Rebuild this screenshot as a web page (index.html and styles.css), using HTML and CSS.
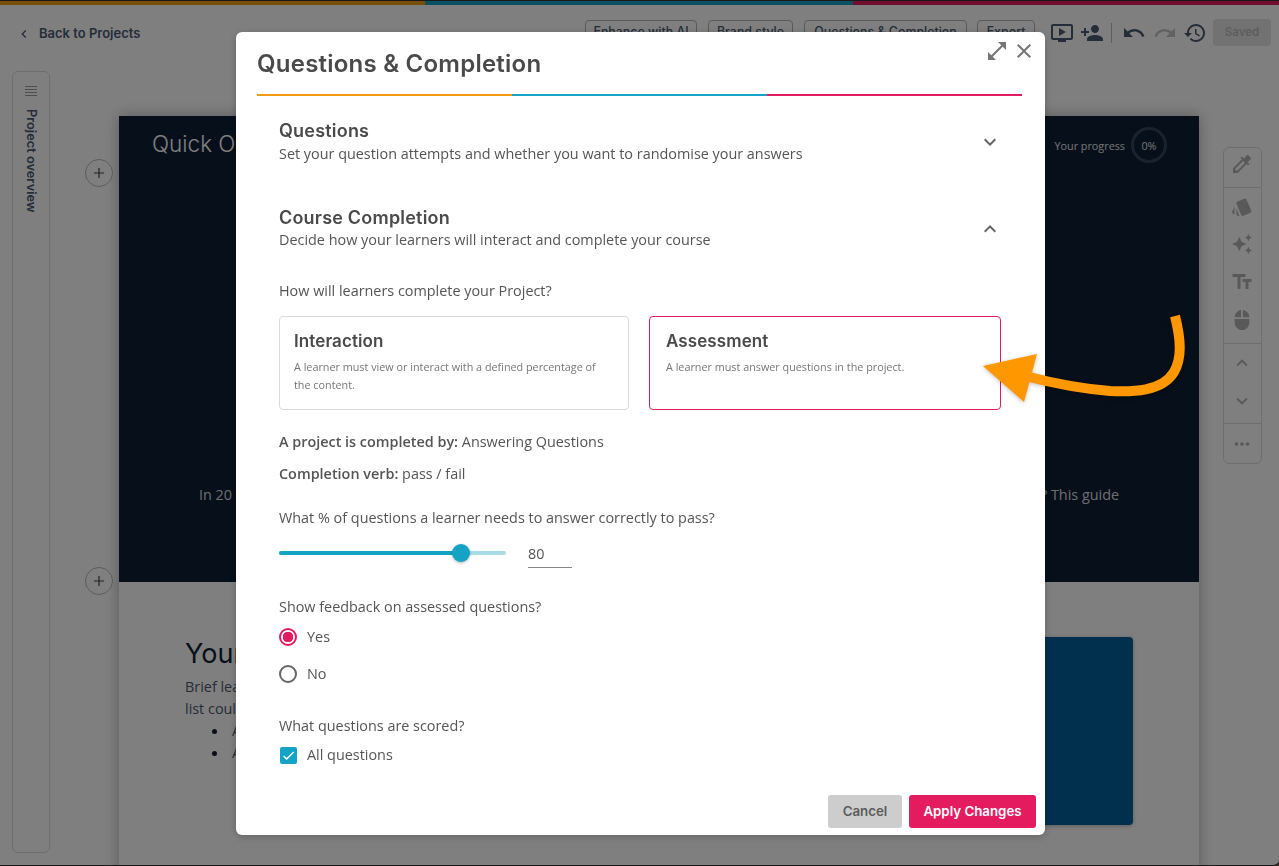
FILE: index.html
```html
<!DOCTYPE html>
<html lang="en">
<head>
<meta charset="utf-8">
<title>Questions &amp; Completion</title>
<link rel="stylesheet" href="styles.css">
</head>
<body>
<div class="page">
  <div class="stripe"><span class="c-orange"></span><span class="c-teal"></span><span class="c-pink"></span></div>
  <header class="topbar">
    <a class="back"><svg class="i14" viewBox="0 0 24 24"><path d="M15.41 7.41L14 6l-6 6 6 6 1.41-1.41L10.83 12z"/></svg>Back to Projects</a>
    <div class="actions">
      <div class="tbtns">
        <button class="tbtn b1">Enhance with AI</button>
        <button class="tbtn b2">Brand style</button>
        <button class="tbtn b3">Questions &amp; Completion</button>
        <button class="tbtn b4">Export</button>
      </div>
      <div class="ticons">
        <svg class="i24" viewBox="0 0 24 24"><path d="M21 3H3c-1.1 0-2 .9-2 2v12c0 1.1.9 2 2 2h5v2h8v-2h5c1.1 0 1.99-.9 1.99-2L23 5c0-1.1-.9-2-2-2zm0 14H3V5h18v12zm-5-6l-7 4V7z"/></svg>
        <svg class="i24" viewBox="0 0 24 24"><path d="M15 12c2.21 0 4-1.79 4-4s-1.79-4-4-4-4 1.79-4 4 1.79 4 4 4zm-9-2V7H4v3H1v2h3v3h2v-3h3v-2H6zm9 4c-2.67 0-8 1.34-8 4v2h16v-2c0-2.66-5.33-4-8-4z"/></svg>
        <span class="vsep"></span>
        <svg class="i24 undo" viewBox="0 0 24 24"><path d="M12.5 8c-2.65 0-5.05.99-6.9 2.6L2 7v9h9l-3.62-3.62c1.39-1.16 3.16-1.88 5.12-1.88 3.54 0 6.55 2.31 7.6 5.5l2.37-.78C21.08 11.03 17.15 8 12.5 8z"/></svg>
        <svg class="i24 off" viewBox="0 0 24 24"><path d="M18.4 10.6C16.55 8.99 14.15 8 11.5 8c-4.65 0-8.58 3.03-9.96 7.22L3.9 16c1.05-3.19 4.05-5.5 7.6-5.5 1.95 0 3.73.72 5.12 1.88L13 16h9V7l-3.6 3.6z"/></svg>
        <svg class="i24" viewBox="0 0 24 24"><path d="M13 3c-4.97 0-9 4.03-9 9H1l3.89 3.89.07.14L9 12H6c0-3.87 3.13-7 7-7s7 3.13 7 7-3.13 7-7 7c-1.93 0-3.68-.79-4.94-2.06l-1.42 1.42C8.27 19.99 10.51 21 13 21c4.97 0 9-4.03 9-9s-4.03-9-9-9zm-1 5v5l4.28 2.54.72-1.21-3.5-2.08V8H12z"/></svg>
        <button class="saved">Saved</button>
      </div>
    </div>
  </header>
  <main class="workspace">
    <aside class="overview">
      <svg class="menu" viewBox="0 0 14 12"><path d="M1 1.5h12M1 4.5h12M1 7.5h12M1 10.5h12" /></svg>
      <span class="overview-label">Project overview</span>
    </aside>
    <div class="canvas">
      <section class="hero">
        <span class="add add-a"><svg viewBox="0 0 12 12"><path d="M6 1v10M1 6h10"/></svg></span>
        <div class="hero-head">
          <span class="hero-title">Quick Overview</span>
          <div class="progress"><span>Your progress</span><span class="ring">0%</span></div>
        </div>
        <p class="hero-text">In 20 minutes, you will learn how to build a course that really engages your learners from the first screen. Ready to get started? This guide</p>
      </section>
      <section class="content">
        <span class="add add-b"><svg viewBox="0 0 12 12"><path d="M6 1v10M1 6h10"/></svg></span>
        <div class="copy">
          <h2>Your learning goals</h2>
          <p>Brief learning objectives could go here.<br>list could be used to present them.</p>
          <ul><li>A first objective</li><li>A second objective</li></ul>
        </div>
        <div class="bluebox"></div>
      </section>
    </div>
    <aside class="tools">
      <div class="tgroup g1">
        <svg class="i24t" viewBox="0 0 24 24"><path d="M20.71 5.63l-2.34-2.34c-.39-.39-1.02-.39-1.41 0l-3.12 3.12-1.93-1.91-1.41 1.41 1.42 1.42L3 16.25V21h4.75l8.92-8.92 1.42 1.42 1.41-1.41-1.92-1.92 3.12-3.12c.4-.4.4-1.03.01-1.42zM6.92 19L5 17.08l8.06-8.06 1.92 1.92L6.92 19z"/></svg>
      </div>
      <div class="tgroup g2">
        <svg class="i22" viewBox="0 0 24 24"><path d="M2.53 19.65l1.34.56v-9.03l-2.43 5.86c-.41 1.02.08 2.19 1.09 2.61zm19.5-3.7L17.07 3.98c-.31-.75-1.04-1.21-1.81-1.23-.26 0-.53.04-.79.15L7.1 5.95c-.75.31-1.21 1.03-1.23 1.8-.01.27.04.54.15.8l4.96 11.97c.31.76 1.05 1.22 1.83 1.23.26 0 .52-.05.77-.15l7.36-3.05c1.02-.42 1.51-1.59 1.09-2.6zM5.88 19.75c0 1.1.9 2 2 2h1.45l-3.45-8.34v6.34z"/></svg>
        <svg class="i22" viewBox="0 0 24 24"><path d="M19 9l1.25-2.75L23 5l-2.75-1.25L19 1l-1.25 2.75L15 5l2.75 1.25L19 9zm-7.5.5L9 4 6.5 9.5 1 12l5.5 2.5L9 20l2.5-5.5L17 12l-5.5-2.5zM19 15l-1.25 2.75L15 19l2.75 1.25L19 23l1.25-2.75L23 19l-2.75-1.25L19 15z"/></svg>
        <svg class="i24t" viewBox="0 0 24 24"><path d="M2.5 4v3h5v12h3V7h5V4h-13zm19 5h-9v3h3v7h3v-7h3V9z"/></svg>
        <svg class="i22" viewBox="0 0 24 24"><path d="M13 1.07V9h7c0-4.08-3.05-7.44-7-7.93zM4 15c0 4.42 3.58 8 8 8s8-3.58 8-8v-4H4v4zm7-13.93C7.05 1.56 4 4.92 4 9h7V1.07z"/></svg>
      </div>
      <div class="tgroup g3">
        <svg class="i22" viewBox="0 0 24 24"><path d="M7.41 15.41L12 10.83l4.59 4.58L18 14l-6-6-6 6z"/></svg>
        <svg class="i22" viewBox="0 0 24 24"><path d="M16.59 8.59L12 13.17 7.41 8.59 6 10l6 6 6-6z"/></svg>
      </div>
      <div class="tgroup g4">
        <svg class="i22" viewBox="0 0 24 24"><path d="M6 10c-1.1 0-2 .9-2 2s.9 2 2 2 2-.9 2-2-.9-2-2-2zm12 0c-1.1 0-2 .9-2 2s.9 2 2 2 2-.9 2-2-.9-2-2-2zm-6 0c-1.1 0-2 .9-2 2s.9 2 2 2 2-.9 2-2-.9-2-2-2z"/></svg>
      </div>
    </aside>
  </main>
</div>

<div class="overlay">
  <div class="modal">
    <div class="modal-head">
      <h1>Questions &amp; Completion</h1>
      <div class="modal-icons">
        <svg class="expand" viewBox="0 0 24 24"><path d="M21 11V3h-8l3.29 3.29-10 10L3 13v8h8l-3.29-3.29 10-10z"/></svg>
        <svg class="close" viewBox="0 0 24 24"><path d="M19 6.41L17.59 5 12 10.59 6.41 5 5 6.41 10.59 12 5 17.59 6.41 19 12 13.41 17.59 19 19 17.59 13.41 12z"/></svg>
      </div>
      <div class="rule"><span class="c-orange"></span><span class="c-teal"></span><span class="c-pink"></span></div>
    </div>
    <div class="modal-body">
      <div class="acc acc-first">
        <div><h3>Questions</h3><p>Set your question attempts and whether you want to randomise your answers</p></div>
        <svg class="chev" viewBox="0 0 24 24"><path d="M16.59 8.59L12 13.17 7.41 8.59 6 10l6 6 6-6z"/></svg>
      </div>
      <div class="acc acc-second">
        <div><h3>Course Completion</h3><p>Decide how your learners will interact and complete your course</p></div>
        <svg class="chev" viewBox="0 0 24 24"><path d="M7.41 15.41L12 10.83l4.59 4.58L18 14l-6-6-6 6z"/></svg>
      </div>
      <p class="line q1">How will learners complete your Project?</p>
      <div class="cards">
        <div class="card"><h4>Interaction</h4><p>A learner must view or interact with a defined percentage of the content.</p></div>
        <div class="card active"><h4>Assessment</h4><p>A learner must answer questions in the project.</p></div>
      </div>
      <p class="line l1"><b>A project is completed by:</b> Answering Questions</p>
      <p class="line l2"><b>Completion verb:</b> pass / fail</p>
      <p class="line l3">What % of questions a learner needs to answer correctly to pass?</p>
      <div class="slider-row">
        <div class="slider"><div class="fill" style="width:80%"><span class="thumb"></span></div></div>
        <span class="value">80</span>
      </div>
      <p class="line l4">Show feedback on assessed questions?</p>
      <div class="opt o1"><span class="radio on"></span>Yes</div>
      <div class="opt o2"><span class="radio"></span>No</div>
      <p class="line l5">What questions are scored?</p>
      <div class="opt o3"><span class="check"><svg viewBox="0 0 24 24"><path d="M9 16.17L4.83 12l-1.42 1.41L9 19 21 7l-1.41-1.41z"/></svg></span>All questions</div>
    </div>
    <div class="modal-foot">
      <button class="btn cancel">Cancel</button>
      <button class="btn apply">Apply Changes</button>
    </div>
  </div>
</div>

<svg class="callout" viewBox="0 0 1279 866">
  <path class="shaft" d="M1175 316C1181 340 1182 358 1174 372C1162 392 1132 392 1110 391C1085 389 1060 385 1025 376"/>
  <path class="head" d="M983 366L1037 354L1024 402Z"/>
</svg>
</body>
</html>
```
FILE: styles.css
```css
* { box-sizing: border-box; }
html, body { margin: 0; height: 100%; }
body { background: #6b5a4a; font-family: "Open Sans", "Liberation Sans", sans-serif; color: #4a4a4a; overflow: hidden; }
p, h1, h2, h3, h4, ul { margin: 0; padding: 0; }
button { font: inherit; }

.c-orange { background: #f39c12; }
.c-teal { background: #13a3c4; }
.c-pink { background: #e51b60; }

.page { height: 866px; overflow: hidden; border-top: 1px solid #333; border-bottom: 1px solid #333; border-radius: 0 0 6px 0; background: #fff; }
.stripe { display: grid; grid-template-columns: 425px 428px 1fr; height: 4px; }

.topbar { display: flex; justify-content: space-between; align-items: flex-start; height: 66px; padding: 14px 8px 0 16px; }
.back { display: flex; align-items: center; height: 29px; gap: 7px; font: 600 13px/1 Inter, sans-serif; color: #4a5b73; }
.i14 { width: 16px; height: 16px; fill: #4a5b73; }
.actions { display: flex; align-items: center; gap: 15px; }
.tbtns { display: flex; gap: 11px; }
.tbtn { height: 26px; padding: 0; border: 1px solid #b5b5b5; border-radius: 4px; background: #fff; font: 500 12.4px/1 Inter, sans-serif; color: #4a5b73; white-space: nowrap; }
.b1 { width: 112px; }
.b2 { width: 85px; }
.b3 { width: 163px; margin-right: -1px; }
.b4 { width: 58px; }
.ticons { display: flex; align-items: center; gap: 6px; }
.i24 { width: 24px; height: 24px; fill: #4a5b73; flex: none; }
.i24.off { fill: #c4c4c4; }
.i24.undo { margin-right: 1px; }
.vsep { width: 1px; height: 20px; background: #bbb; margin: 0 4px 0 1px; }
.saved { width: 58px; height: 27px; border: 0; border-radius: 4px; background: #e4e4e4; color: #bbb; font: 600 11.5px/1 Inter, sans-serif; }

.workspace { display: flex; align-items: flex-start; padding-left: 12px; }
.overview { width: 38px; height: 782px; margin-right: 69px; border: 1px solid #dcdcdc; border-radius: 6px; display: flex; flex-direction: column; align-items: center; padding-top: 13px; gap: 12px; }
.menu { width: 14px; height: 12px; fill: none; stroke: #9d9d9d; stroke-width: 1; flex: none; }
.overview-label { writing-mode: vertical-rl; font: 600 12.8px/1 Inter, sans-serif; color: #4a5b73; white-space: nowrap; }

.canvas { width: 1080px; margin-top: 45px; flex: none; box-shadow: 0 0 14px rgba(0,0,0,.3); }
.hero { position: relative; height: 466px; background: #0c1f35; color: #fff; }
.hero-head { display: flex; justify-content: space-between; align-items: center; height: 58px; padding: 0 32px 0 33px; }
.hero-title { font: 300 22.5px/1 Inter, sans-serif; margin-top: -2px; }
.progress { display: flex; align-items: center; gap: 6px; font-size: 10.8px; color: #e8e8e8; }
.ring { display: flex; align-items: center; justify-content: center; width: 36px; height: 36px; border: 3px solid #35465a; border-radius: 50%; }
.hero-text { margin-top: 310px; font-size: 14.4px; line-height: 22px; text-align: center; color: #ddd; white-space: nowrap; }
.add { position: absolute; left: -34px; width: 28px; height: 28px; border: 1px solid #b8b8b8; border-radius: 50%; display: flex; align-items: center; justify-content: center; background: #fff; }
.add svg { width: 12px; height: 12px; fill: none; stroke: #444; stroke-width: 1.2; }
.add-a { top: 43px; }
.add-b { top: -15px; }

.content { position: relative; display: flex; justify-content: space-between; height: 300px; padding: 55px 66px 0; background: #fff; }
.copy { width: 480px; color: #4d5a70; }
.copy h2 { font: 400 27px/32px Inter, sans-serif; color: #0c1f35; margin: 1px 0 6px; }
.copy p { font-size: 14.4px; line-height: 22px; white-space: nowrap; }
.copy ul { margin-left: 27px; font-size: 14.4px; line-height: 22px; list-style: none; }
.copy li { display: flex; align-items: center; white-space: nowrap; }
.copy li::before { content: ""; width: 5px; height: 5px; border-radius: 50%; background: #0c1f35; margin-right: 15px; flex: none; }
.bluebox { width: 460px; height: 188px; border-radius: 4px; background: #03609c; box-shadow: 0 1px 4px rgba(0,0,0,.3); }

.tools { width: 39px; margin: 76px 0 0 24px; flex: none; border: 1px solid #dcdcdc; border-radius: 6px; }
.tgroup { display: flex; flex-direction: column; align-items: center; border-bottom: 1px solid #dcdcdc; }
.tgroup:last-child { border-bottom: 0; }
.tgroup svg { fill: #b3b3b3; flex: none; margin-left: -1px; }
.i22 { width: 22px; height: 22px; }
.i24t { width: 24px; height: 24px; }
.g1 { height: 40px; padding-top: 4px; }
.g2 { height: 156px; padding-top: 8px; gap: 15px; }
.g3 { height: 80px; padding-top: 8px; gap: 16px; }
.g4 { height: 39px; justify-content: center; }

.overlay { position: fixed; inset: 0; display: flex; align-items: flex-start; justify-content: flex-start; padding: 32px 0 0 236px; background: rgba(0,0,0,.5); }
.modal { position: relative; width: 809px; height: 803px; display: flex; flex-direction: column; background: #fff; border-radius: 6px; box-shadow: 0 2px 8px rgba(0,0,0,.2); overflow: hidden; }
.modal-head { padding: 13px 23px 0 21px; flex: none; }
.modal-head h1 { font: 600 24px/36px Inter, sans-serif; letter-spacing: .23px; color: #4a4a4a; margin-top: 1px; margin-bottom: -1px; }
.modal-icons { position: absolute; top: 7px; right: 9px; display: flex; align-items: center; gap: 3px; }
.modal-icons svg { fill: #757575; }
.expand { width: 24px; height: 24px; }
.close { width: 24px; height: 24px; }
.rule { display: grid; grid-template-columns: repeat(3, 1fr); height: 2px; margin-top: 13px; }

.modal-body { flex: 1; min-height: 0; overflow: hidden; padding: 0 44px 0 43px; font-size: 14.4px; line-height: 22px; color: #555; }
.acc { display: flex; justify-content: space-between; align-items: center; }
.acc h3 { font: 600 18px/24px Inter, sans-serif; letter-spacing: .2px; color: #4a4a4a; }
.acc p { font-size: 14.4px; line-height: 22px; }
.acc-first { padding-top: 23px; }
.acc-second { margin-top: 41px; }
.acc-second p { margin-top: -1px; }
.chev { width: 24px; height: 24px; fill: #666; margin-right: -1px; }
.line b { font-weight: 600; }
.q1 { margin-top: 29px; }
.cards { display: grid; grid-template-columns: 350px 352px; gap: 20px; margin-top: 14px; }
.card { height: 94px; padding: 13px 14px 0; border: 1px solid #dbdbdb; border-radius: 4px; }
.card.active { border-color: #e51b60; padding-left: 16px; }
.card h4 { font: 600 17px/22px Inter, sans-serif; letter-spacing: .1px; color: #4a4a4a; margin-bottom: 6px; }
.card p { font-size: 10.8px; line-height: 18px; color: #777; }
.l1 { margin-top: 21px; }
.l2 { margin-top: 10px; }
.l3 { margin-top: 22px; }
.slider-row { display: flex; align-items: center; height: 30px; margin-top: 9px; gap: 22px; }
.slider { width: 227px; height: 4px; border-radius: 2px; background: #a9dce8; }
.fill { position: relative; height: 4px; border-radius: 2px; background: #13a3c4; }
.thumb { position: absolute; right: -9px; top: -7px; width: 18px; height: 18px; border-radius: 50%; background: #13a3c4; box-shadow: 0 1px 3px rgba(0,0,0,.3); }
.value { width: 44px; height: 29px; margin-top: 1px; padding-top: 4px; border-bottom: 1px solid #888; color: #555; }
.l4 { margin-top: 28px; }
.opt { display: flex; align-items: center; height: 20px; gap: 10px; }
.o1 { margin-top: 9px; }
.o2 { margin-top: 17px; }
.l5 { margin-top: 31px; }
.o3 { margin-top: 8px; }
.radio { width: 18px; height: 18px; border: 2px solid #666; border-radius: 50%; flex: none; }
.radio.on { border-color: #e51b60; background: radial-gradient(circle, #e51b60 0 5px, #fff 5.5px); }
.check { width: 17px; height: 17px; margin-left: 1px; border-radius: 2px; background: #13a3c4; display: flex; align-items: center; justify-content: center; flex: none; }
.check svg { width: 15px; height: 15px; fill: #fff; }

.modal-foot { flex: none; display: flex; justify-content: flex-end; gap: 7px; padding: 0 9px 7px 0; }
.btn { height: 33px; border: 0; border-radius: 3px; font: 600 13.3px/1 Inter, sans-serif; }
.cancel { width: 74px; background: #cdcdcd; color: #5c5c5c; }
.apply { width: 127px; background: #e51b60; color: #fff; }

.callout { position: fixed; inset: 0; width: 1279px; height: 866px; pointer-events: none; filter: drop-shadow(0 1px 2px rgba(0,0,0,.25)); }
.shaft { fill: none; stroke: #ff9800; stroke-width: 10; }
.head { fill: #ff9800; }
```
